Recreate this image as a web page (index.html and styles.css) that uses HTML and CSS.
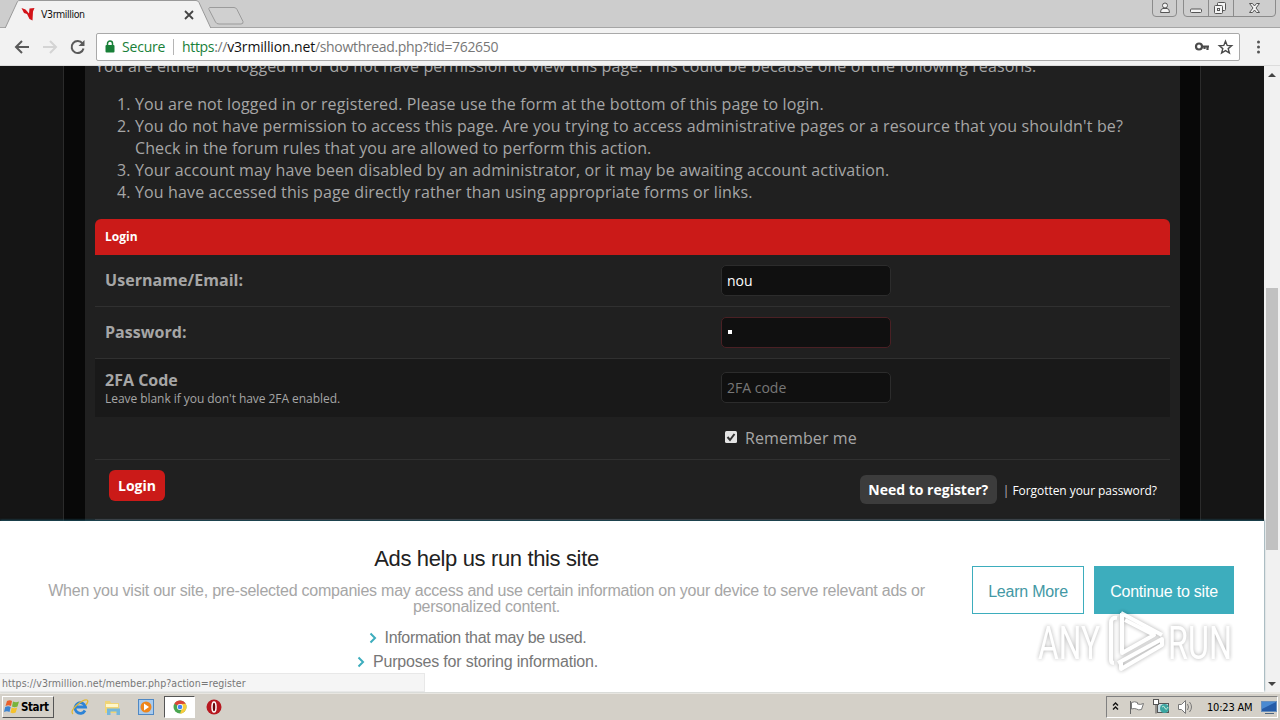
FILE: index.html
```
<!DOCTYPE html>
<html lang="en">

<head>
  <meta charset="UTF-8">
  <meta name="viewport" content="width=device-width, initial-scale=1.0">
  <title>V3rmillion</title>
  <link rel="stylesheet" href="styles.css">
</head>

<body>
  <!-- Tabs -->
  <header class="tab-strip">
    <svg class="tab-shapes" width="260" height="28" viewBox="0 0 260 28">
      <path d="M0 28.500H5L17.500 1.500Q18 .5 20 .5H196Q198 .5 199 2.500L211 28.500Z" fill="#f2f2f2" stroke="#999" />
      <path d="M209.500 7.500H234Q236 7.500 237 9.500L243 21.500Q243.500 24 241 24H219Q216.500 24 215.500 22L209 9.500Q208.500 8 209.500 7.500Z" fill="#d0d0d0" stroke="#9b9b9b" />
      <path d="M21.500 8l4 1.500 3.500 4 .5-5 5-.5-1.500 3.500-.5 9-3-1.500-2.500-5-3-1z" fill="#d31218" />
      <path d="M185 11l8 8M193 11l-8 8" stroke="#444" stroke-width="1.800" />
    </svg>
    <span class="tab-title">V3rmillion</span>
    <div class="window-buttons">
      <svg width="128" height="18" viewBox="0 0 128 18" fill="none" stroke="#8b8b8b">
        <path d="M.5 0V13Q.5 16.500 4 16.500H21Q24.500 16.500 24.500 13V0M31.500 0V13Q31.500 16.500 35 16.500H120Q123.500 16.500 123.500 13V0M56.500 0V16M81.500 0V16" />
        <g stroke="#555" fill="#f4f4f4">
          <circle cx="13" cy="5.500" r="2.500" />
          <path d="M8.500 12.500Q8.500 8.500 11 8.500H15Q17.500 8.500 17.500 12.500Z" />
          <rect x="38.500" y="9" width="11" height="3.500" rx="1" />
          <rect x="65.500" y="2.500" width="8" height="8" rx="1" />
          <rect x="62.500" y="5.500" width="8" height="8" rx="1" />
          <rect x="65.500" y="8.500" width="2" height="2" />
          <path d="M97.500 3.500h3l2 2.500 2-2.500h3l-3.500 4.500 3.500 4.500h-3l-2-2.500-2 2.500h-3l3.500-4.500z" />
        </g>
      </svg>
    </div>
  </header>

  <!-- Toolbar -->
  <nav class="toolbar">
    <svg class="nav-icons" width="96" height="38" viewBox="0 0 96 38" fill="none" stroke-width="2">
      <path d="M29 19H16.500M22 13l-6 6 6 6" stroke="#5a5a5a" />
      <path d="M43 19H55.500M50 13l6 6-6 6" stroke="#d4d4d4" />
      <path d="M82.500 15.500A6 6 0 1 0 83.500 20.500" stroke="#5a5a5a" />
      <path d="M84.500 12v6h-6z" fill="#5a5a5a" />
    </svg>
    <div class="address">
      <svg class="lock" width="10" height="13" viewBox="0 0 10 13">
        <rect x=".5" y="5" width="9" height="7.500" rx="1" fill="#188038" />
        <path d="M2.500 6V3.500a2.500 2.500 0 0 1 5 0V6" fill="none" stroke="#188038" stroke-width="1.500" />
      </svg>
      <span class="secure">Secure</span>
      <span class="divider"></span>
      <span class="url"><span class="scheme">https</span>://<span class="host">v3rmillion.net</span><span class="path">/showthread.php?tid=762650</span></span>
      <svg class="address-icons" width="40" height="16" viewBox="0 0 40 16" fill="none" stroke="#4a4a4a">
        <circle cx="5" cy="7.500" r="3" stroke-width="2.200" />
        <path d="M8 7.500h7M13.500 7.500V11M10.500 7.500v2.500" stroke-width="2.200" />
        <path d="M32.500 2.200l1.700 4.200 4.500.3-3.500 2.900 1.200 4.400-3.900-2.400-3.900 2.400 1.200-4.400-3.500-2.900 4.500-.3z" transform="translate(-1 0)" stroke-width="1.400" />
      </svg>
    </div>
    <svg class="menu-dots" width="40" height="38" viewBox="0 0 40 38" fill="#555">
      <circle cx="18.500" cy="14" r="1.500" />
      <circle cx="18.500" cy="19" r="1.500" />
      <circle cx="18.500" cy="24" r="1.500" />
    </svg>
  </nav>

  <!-- Web page -->
  <div class="viewport">
    <div class="page">
      <div class="forum">
        <main class="content">
          <p class="notice">You are either not logged in or do not have permission to view this page. This could be because one of the following reasons:</p>
          <ol class="reasons">
            <li>You are not logged in or registered. Please use the form at the bottom of this page to login.</li>
            <li>You do not have permission to access this page. Are you trying to access administrative pages or a resource that you shouldn't be?<br><span class="reason-rest">Check in the forum rules that you are allowed to perform this action.</span></li>
            <li>Your account may have been disabled by an administrator, or it may be awaiting account activation.</li>
            <li>You have accessed this page directly rather than using appropriate forms or links.</li>
          </ol>

          <form class="login">
            <div class="login-head">Login</div>
            <div class="row">
              <label>Username/Email:</label>
              <div class="field">nou</div>
            </div>
            <div class="row">
              <label>Password:</label>
              <div class="field focused"><span class="dot"></span></div>
            </div>
            <div class="row row-code">
              <label>2FA Code<small>Leave blank if you don't have 2FA enabled.</small></label>
              <div class="field placeholder">2FA code</div>
            </div>
            <div class="row row-remember">
              <svg class="checkbox" width="12" height="12" viewBox="0 0 12 12">
                <rect width="12" height="12" rx="1.500" fill="#e4e4e4" />
                <path d="M2.500 6l2.500 3 4.500-6" fill="none" stroke="#333" stroke-width="2" />
              </svg>
              <span>Remember me</span>
            </div>
            <div class="login-foot">
              <span class="button button-login">Login</span>
              <span class="button button-register">Need to register?</span>
              <span class="bar">|</span>
              <span class="forgot">Forgotten your password?</span>
            </div>
          </form>
        </main>
      </div>

      <!-- Consent banner -->
      <section class="banner">
        <div class="banner-text">
          <h2>Ads help us run this site</h2>
          <p>When you visit our site, pre-selected companies may access and use certain information on your device to serve relevant ads or<br>personalized content.</p>
          <div class="banner-item"><svg width="8" height="12" viewBox="0 0 8 12"><path d="M1.500 1.500L6 6l-4.500 4.500" /></svg><span class="item-used">Information that may be used.</span></div>
          <div class="banner-item"><svg width="8" height="12" viewBox="0 0 8 12"><path d="M1.500 1.500L6 6l-4.500 4.500" /></svg><span>Purposes for storing information.</span></div>
        </div>
        <span class="banner-button learn">Learn More</span>
        <span class="banner-button continue">Continue to site</span>
      </section>

      <div class="status">https://v3rmillion.net/member.php?action=register</div>
      <svg class="watermark" width="204" height="70" viewBox="0 0 204 70">
        <g fill="#fff" font-family="Roboto, sans-serif" font-size="47">
          <text x="4" y="53" textLength="62" lengthAdjust="spacingAndGlyphs">ANY</text>
          <text x="134" y="53" textLength="64" lengthAdjust="spacingAndGlyphs">RUN</text>
        </g>
        <path d="M83 12Q77 11 77 17V54Q77 57 80 57M87 7L128 29M88 7V47L120 29 91 14M87 56V63L128 39V33L84 57" fill="none" stroke="#fff" stroke-width="4" stroke-linejoin="round" />
      </svg>
    </div>
    <div class="scrollbar">
      <svg width="16" height="16" viewBox="0 0 16 16"><path d="M4 11l4-4 4 4z" fill="#444" /></svg>
      <div class="thumb"></div>
      <svg width="16" height="16" viewBox="0 0 16 16"><path d="M4 6h8l-4 4z" fill="#444" /></svg>
    </div>
  </div>

  <!-- Taskbar -->
  <footer class="taskbar">
    <div class="start">
      <svg width="16" height="16" viewBox="0 0 16 16">
        <path d="M3 2q3-1.500 5 0L7 7Q4.500 5.500 1.500 7z" fill="#e8602c" />
        <path d="M9 2.500q3 1.500 6 0l-1.500 5q-3 1.500-5.500 0z" fill="#79b43c" />
        <path d="M1.200 8q3-1.500 5.500 0l-1.200 5q-2.500-1.500-5.500 0z" fill="#3b83d0" />
        <path d="M7.700 8.500q2.500 1.500 5.500 0l-1.500 5q-3 1.500-5.200 0z" fill="#f5c22d" />
      </svg>
      <span>Start</span>
    </div>
    <div class="launchers">
      <svg width="18" height="18" viewBox="0 0 18 18" fill="none">
        <path d="M14 12.500A5.300 5.300 0 1 1 14.500 9H5" stroke="#2d83d6" stroke-width="2.800" />
        <path d="M2 16Q-1 13 6 7T16 2q2 1-1 5" stroke="#e3b934" stroke-width="1.300" />
      </svg>
      <svg width="18" height="18" viewBox="0 0 18 18">
        <path d="M1 3h5l1 2h8v10H1z" fill="#efd477" />
        <path d="M2 6h12v3H2z" fill="#fff6c9" />
        <path d="M3 17V10.500h13V17h-3.500v-3.500h-6V17z" fill="#75b7dc" />
      </svg>
      <svg width="18" height="18" viewBox="0 0 18 18">
        <rect x="1.500" y="1.500" width="15" height="15" fill="#a9cbed" stroke="#4f88c4" />
        <circle cx="9" cy="9" r="5.500" fill="#ee861c" />
        <path d="M7 5.500v7L12 9z" fill="#fff" />
      </svg>
      <div class="active-task">
        <svg width="14" height="14" viewBox="0 0 14 14">
          <circle cx="7" cy="7" r="6.500" fill="#4aa650" />
          <path d="M1.300 3.800A6.500 6.500 0 0 1 12.700 3.800L7 7z" fill="#db4437" />
          <path d="M12.700 3.800A6.500 6.500 0 0 1 7 13.500L9.500 7 7 4z" fill="#f8cc3c" />
          <circle cx="7" cy="7" r="3" fill="#fff" />
          <circle cx="7" cy="7" r="2.300" fill="#4285f4" />
        </svg>
      </div>
      <svg width="16" height="16" viewBox="0 0 16 16">
        <circle cx="8" cy="8" r="7.500" fill="#b71820" />
        <ellipse cx="8" cy="8" rx="2" ry="5" fill="#6b080c" stroke="#fff" stroke-width="1.500" />
      </svg>
    </div>
    <div class="tray">
      <svg width="86" height="20" viewBox="0 0 86 20" fill="none">
        <path d="M6 8.500l2.500-2.500L11 8.500M6 12.500l2.500-2.500 2.500 2.500" stroke="#111" stroke-width="1.400" />
        <path d="M23.500 17V4" stroke="#666" />
        <path d="M24.500 5.500q3-1.500 6 0v1.500q3 1 6-.5l-2 6q-3 1-5-.5-2-1-5 0z" fill="#fff" stroke="#777" />
        <rect x="50.500" y="6.500" width="11" height="9" fill="#cbe0e7" stroke="#555" />
        <rect x="46.500" y="2.500" width="5" height="5" fill="#fff" stroke="#555" />
        <path d="M49 7.500v9" stroke="#555" />
        <circle cx="57.500" cy="11.500" r="4.500" fill="#3ba5a0" />
        <path d="M55 10q2-2 3 1t3-1" stroke="#c9ead9" />
        <path d="M71.500 7.500h3l4-4v13l-4-4h-3z" fill="#fff" stroke="#777" />
        <path d="M80.500 7q2 3 0 6M82.500 5q4 5 0 10" stroke="#777" />
      </svg>
      <span class="clock">10:23 AM</span>
      <svg width="16" height="16" viewBox="0 0 16 16">
        <rect x=".5" y="2.500" width="15" height="10" fill="#265ca8" stroke="#6990bd" />
        <path d="M1 3h14L1 10z" fill="#4a8ad2" />
        <path d="M4 14.500h9" stroke="#4c6580" />
      </svg>
    </div>
  </footer>
</body>

</html>
```
FILE: styles.css
```
* {
  box-sizing: border-box;
}

body {
  margin: 0;
  width: 1280px;
  height: 720px;
  display: flex;
  flex-direction: column;
  overflow: hidden;
  font-family: "Open Sans", sans-serif;
}

svg {
  display: block;
  flex: none;
}

span {
  white-space: nowrap;
}

/* browser tabs */
.tab-strip {
  height: 28px;
  flex: none;
  display: flex;
  background: #cdcdcd;
  border-bottom: 1px solid #a5a5a5;
}

.tab-title {
  margin-left: -219px;
  padding-top: 7px;
  font: 10.5px/14px "DejaVu Sans Condensed", sans-serif;
  letter-spacing: -0.4px;
  color: #111;
}

.window-buttons {
  margin-left: auto;
}

/* toolbar */
.toolbar {
  height: 38px;
  flex: none;
  display: flex;
  align-items: center;
  background: #f2f2f2;
  border-bottom: 1px solid #dcdcdc;
}

.address {
  width: 1144px;
  height: 28px;
  display: flex;
  align-items: center;
  padding: 0 5px 0 8px;
  background: #fff;
  border: 1px solid #a9a9a9;
  border-radius: 2px;
  font-size: 14px;
  line-height: 20px;
}

.secure {
  width: 43px;
  margin-left: 7px;
  color: #188038;
  letter-spacing: -0.2px;
}

.divider {
  width: 1px;
  height: 16px;
  margin: 0 8px;
  background: #b5b5b5;
}

.url {
  color: #777;
  letter-spacing: -0.33px;
}

.scheme {
  color: #188038;
}

.host {
  color: #111;
  letter-spacing: -0.15px;
}

.address-icons {
  margin-left: auto;
}

/* page */
.viewport {
  flex: 1;
  display: flex;
  min-height: 0;
}

.page {
  position: relative;
  width: 1264px;
  display: flex;
  flex-direction: column;
  background: #151515;
}

.forum {
  height: 455px;
  width: 1138px;
  margin-left: 63px;
  padding: 0 20px 0 21px;
  overflow: hidden;
  background: #080808;
  border-left: 1px solid #2b2b2b;
  border-right: 1px solid #2b2b2b;
}

.content {
  height: 455px;
  padding: 0 10px;
  background: #202020;
  color: #a6a6a6;
  font-size: 16px;
  line-height: 22px;
  white-space: nowrap;
}

.notice {
  margin: -11px 0 16px;
  letter-spacing: 0.11px;
}

.content::before {
  content: "";
  display: table;
}

.reasons {
  margin: 0 0 16px;
  padding-left: 40px;
  letter-spacing: 0.13px;
}

.reasons li:nth-child(2) {
  letter-spacing: 0.148px;
}

.reasons .reason-rest {
  letter-spacing: 0.09px;
}

.login-head {
  height: 36px;
  padding-left: 10px;
  background: #cb1a18;
  border-radius: 6px 6px 0 0;
  color: #fff;
  font-size: 12px;
  font-weight: bold;
  line-height: 36px;
}

.row {
  height: 52px;
  display: flex;
  align-items: center;
  padding-left: 10px;
  border-bottom: 1px solid #303030;
}

.row label {
  width: 616px;
  padding-bottom: 2px;
  font-weight: bold;
  letter-spacing: 0.05px;
}

.row small {
  display: block;
  font-size: 12px;
  font-weight: normal;
  letter-spacing: -0.05px;
  line-height: 16px;
}

.field {
  width: 170px;
  height: 31px;
  padding-left: 5px;
  background: #101010;
  border: 1px solid #2c2c2c;
  border-radius: 5px;
  color: #fff;
  font-size: 14px;
  line-height: 29px;
}

.focused {
  display: flex;
  align-items: center;
  border-color: #4a2024;
}

.dot {
  width: 4px;
  height: 4px;
  margin: 0 0 1px 1px;
  background: #fff;
}

.row-code {
  height: 58px;
  background: #191919;
  border-bottom: 0;
}

.row-code label {
  padding-bottom: 0;
  letter-spacing: 0;
}

.placeholder {
  margin-bottom: 2px;
  color: #777;
}

.row-remember {
  height: 43px;
  gap: 8px;
  padding-left: 630px;
  letter-spacing: 0.1px;
}

.checkbox {
  margin-bottom: 2px;
}

.login-foot {
  height: 60px;
  display: flex;
  padding: 10px 13px 0 14px;
  border-bottom: 1px solid #4a3a3a;
  color: #fff;
  font-size: 12px;
}

.button {
  border-radius: 6px;
  font-size: 14px;
  font-weight: bold;
  text-align: center;
}

.button-login {
  width: 56px;
  height: 31px;
  background: #cb1a18;
  line-height: 31px;
}

.button-register {
  width: 137px;
  height: 29px;
  margin: 5px 6px 0 auto;
  background: #3c3c3c;
  line-height: 29px;
}

.bar {
  margin: 10px 3px 0 0;
  color: #bbb;
}

.forgot {
  margin-top: 10px;
  letter-spacing: -0.05px;
}

/* consent banner */
.banner {
  height: 171px;
  display: flex;
  align-items: flex-start;
  background: #fff;
  box-shadow: 0 -1px 2px #1d5263;
  font-family: "Liberation Sans", sans-serif;
  font-size: 16px;
}

.banner-text {
  width: 972px;
  padding-left: 1px;
  color: #777;
  text-align: center;
}

.banner h2 {
  margin: 25px 0 11px;
  color: #222;
  font-size: 22px;
  font-weight: normal;
  letter-spacing: -0.36px;
  line-height: 26px;
}

.banner p {
  margin: 0 0 11px;
  color: #a6a6a6;
  letter-spacing: -0.235px;
  line-height: 16px;
  white-space: nowrap;
}

.banner-item {
  height: 24px;
  display: flex;
  align-items: center;
  justify-content: center;
  gap: 8px;
  padding-right: 18px;
  letter-spacing: -0.19px;
}

.item-used {
  letter-spacing: -0.34px;
}

.banner-item path {
  fill: none;
  stroke: #3dadbd;
  stroke-width: 2;
}

.banner-button {
  height: 48px;
  margin-top: 45px;
  border: 1px solid #3dadbd;
  color: #4398a4;
  letter-spacing: -0.22px;
  line-height: 49px;
  text-align: center;
}

.learn {
  width: 112px;
}

.continue {
  width: 140px;
  margin-left: 10px;
  background: #3dadbd;
  color: #fff;
}

.status {
  position: absolute;
  left: 0;
  bottom: 0;
  width: 425px;
  height: 19px;
  padding-left: 2px;
  background: #f5f5f5;
  border: 1px solid #e8e8e8;
  border-left: 0;
  color: #777;
  font: 10.5px/18px "DejaVu Sans Condensed", sans-serif;
  letter-spacing: 0.06px;
}

.watermark {
  position: absolute;
  left: 1034px;
  top: 540px;
  opacity: 0.9;
  filter: drop-shadow(0 0 2px rgba(0, 0, 0, 0.35));
}

.scrollbar {
  width: 16px;
  display: flex;
  flex-direction: column;
  background: #f1f1f1;
}

.thumb {
  width: 12px;
  height: 262px;
  margin: 206px 2px auto;
  background: #c1c1c1;
}

/* taskbar */
.taskbar {
  height: 28px;
  flex: none;
  display: flex;
  align-items: center;
  background: #d4d0c8;
  border-top: 2px solid #e9e7e2;
}

.start {
  width: 52px;
  height: 22px;
  display: flex;
  align-items: center;
  gap: 1px;
  margin: 0 0 0 2px;
  padding-left: 1px;
  border: 1px solid;
  border-color: #fff #555 #555 #fff;
  font: bold 11.5px "DejaVu Sans Condensed", sans-serif;
  letter-spacing: -0.4px;
}

.launchers {
  display: flex;
  align-items: center;
  margin-left: 17px;
  gap: 15px;
}

.active-task {
  width: 31px;
  height: 22px;
  margin: 0 -4px 0 -6px;
  display: flex;
  align-items: center;
  justify-content: center;
  background: #fff;
  border: 1px solid;
  border-color: #555 #fff #fff #555;
}

.tray {
  width: 172px;
  height: 22px;
  display: flex;
  align-items: center;
  margin: 0 2px 0 auto;
  border: 1px solid;
  border-color: #808080 #fff #fff #808080;
}

.clock {
  width: 48px;
  margin: 0 6px 0 14px;
  font: 11px "DejaVu Sans Condensed", sans-serif;
  letter-spacing: -0.2px;
}
```
